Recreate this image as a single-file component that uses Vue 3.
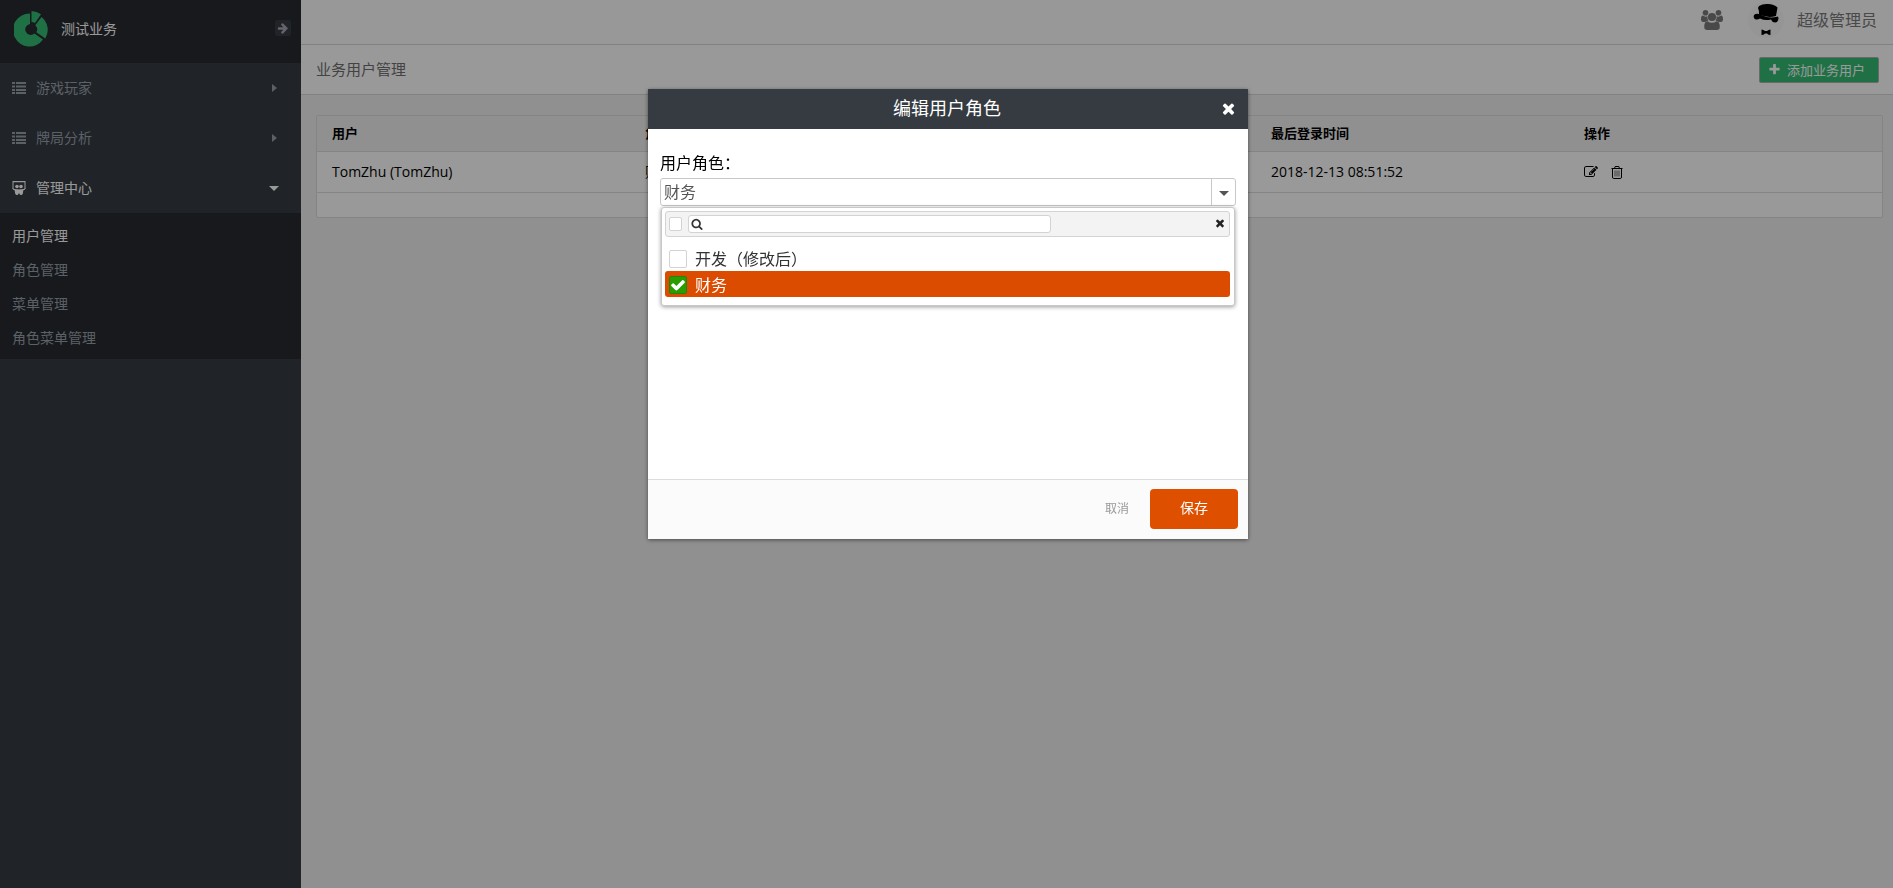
<script setup>
import { ref } from 'vue'

const paths = {
  times: 'M1490 1322q0 40-28 68l-136 136q-28 28-68 28t-68-28l-294-294-294 294q-28 28-68 28t-68-28l-136-136q-28-28-28-68t28-68l294-294-294-294q-28-28-28-68t28-68l136-136q28-28 68-28t68 28l294 294 294-294q28-28 68-28t68 28l136 136q28 28 28 68t-28 68l-294 294 294 294q28 28 28 68z',
  plus: 'M1600 736v192q0 40-28 68t-68 28h-416v416q0 40-28 68t-68 28h-192q-40 0-68-28t-28-68v-416h-416q-40 0-68-28t-28-68v-192q0-40 28-68t68-28h416v-416q0-40 28-68t68-28h192q40 0 68 28t28 68v416h416q40 0 68 28t28 68z',
  search: 'M1216 832q0-185-131.500-316.500t-316.500-131.500-316.500 131.500-131.500 316.500 131.500 316.500 316.500 131.500 316.500-131.500 131.500-316.500zm512 832q0 52-38 90t-90 38q-54 0-90-38l-343-342q-179 124-399 124-143 0-273.500-55.500t-225-150-150-225-55.500-273.500 55.500-273.500 150-225 225-150 273.500-55.500 273.500 55.500 225 150 150 225 55.500 273.500q0 220-124 399l343 343q37 37 37 90z',
  arrow: 'M1600 960q0 54-37 91l-651 651q-39 37-91 37-51 0-90-37l-75-75q-38-38-38-91t38-91l293-293h-704q-52 0-84.500-37.500t-32.500-90.500v-128q0-53 32.500-90.500t84.500-37.500h704l-293-294q-38-36-38-90t38-90l75-75q38-38 90-38 53 0 91 38l651 651q37 35 37 90z',
  check: 'M1671 566q0 40-28 68l-724 724-136 136q-28 28-68 28t-68-28l-136-136-362-362q-28-28-28-68t28-68l136-136q28-28 68-28t68 28l294 295 656-657q28-28 68-28t68 28l136 136q28 28 28 68z',
  edit: 'M888 1184l116-116-152-152-116 116v56h96v96h56zm440-720q-16-16-33 1l-350 350q-17 17-1 33t33-1l350-350q17-17 1-33zm80 594v190q0 119-84.500 203.500t-203.500 84.500h-832q-119 0-203.500-84.500t-84.500-203.500v-832q0-119 84.500-203.500t203.500-84.500h832q63 0 117 25 15 7 18 23 3 17-9 29l-49 49q-14 14-32 8-23-6-45-6h-832q-66 0-113 47t-47 113v832q0 66 47 113t113 47h832q66 0 113-47t47-113v-126q0-13 9-22l64-64q15-15 35-7t20 29zm-96-738l288 288-672 672h-288v-288zm444 132l-92 92-288-288 92-92q28-28 68-28t68 28l152 152q28 28 28 68t-28 68z'
}

const menus = [
  { name: '游戏玩家', open: false },
  { name: '牌局分析', open: false },
  { name: '管理中心', open: true }
]
const subMenus = ['用户管理', '角色管理', '菜单管理', '角色菜单管理']
const columns = ['用户', '角色', '', '最后登录时间', '操作']
const roles = ref([
  { name: '开发（修改后）', checked: false },
  { name: '财务', checked: true }
])
const keyword = ref('')
</script>

<template>
  <div class="layout">
    <aside class="sidebar">
      <header class="brand">
        <svg class="logo" viewBox="0 0 34 36" aria-hidden="true">
          <path d="M16 2.500V13a5.500 5.500 0 1 0 4.500 9.500l8.500 6A16.500 16.500 0 1 1 16 2.500z" />
          <path d="M17.500 0a17 17 0 0 1 9.500 3.300L21 12a7 7 0 0 0-3.500-1z" />
          <path d="M27.500 6a16.500 16.500 0 0 1 3.800 21.500L22.300 21.300a5.500 5.500 0 0 0-1-7z" />
        </svg>
        <span class="brand-name">测试业务</span>
        <button class="collapse" type="button" aria-label="收起菜单">
          <svg viewBox="0 0 1792 1792"><path :d="paths.arrow" /></svg>
        </button>
      </header>
      <nav>
        <button v-for="m in menus" :key="m.name" type="button" class="menu" :class="{ open: m.open }">
          <svg v-if="!m.open" class="menu-icon" viewBox="0 0 14 14" aria-hidden="true">
            <path d="M0 1h3v2H0zM4 1h10v2H4zM0 4.500h3v2H0zM4 4.500h10v2H4zM0 8h3v2H0zM4 8h10v2H4zM0 11h3v2H0zM4 11h10v2H4z" />
          </svg>
          <svg v-else class="menu-icon" viewBox="0 0 14 14" aria-hidden="true">
            <path d="M.5 0h13v8h-1V1.200h-11V8h-1z" />
            <circle cx="5" cy="5.500" r="1.800" /><circle cx="9" cy="5.500" r="1.800" />
            <path d="M.3 7.200q3 1.600 6.200 1 .5.500 1 0 3.200.6 6.200-1-.7 1.600-2.600 2.400.4 3.600-1.500 4.400-1.900.3-2.100-1.500-.5.300-1 0-.2 1.800-2.100 1.500-1.900-.8-1.500-4.400Q1 8.800.3 7.200z" />
          </svg>
          <span>{{ m.name }}</span>
          <i class="caret" :class="m.open ? 'down' : 'right'"></i>
        </button>
        <ul class="submenu">
          <li v-for="(s, i) in subMenus" :key="s"><a href="#" :class="{ active: i === 0 }">{{ s }}</a></li>
        </ul>
      </nav>
    </aside>

    <main class="main">
      <header class="topbar">
        <svg class="users" viewBox="0 0 22 20" aria-hidden="true">
          <circle cx="4.500" cy="2.800" r="2.800" /><circle cx="17.500" cy="2.800" r="2.800" />
          <path d="M6.500 6.300Q6 9 7.600 10.500 5.500 10.600 4.400 12H2.400Q0 12 0 9.800 0 5.600 1.800 5.600q2.500 1.700 4.700.7zM15.500 6.300q.5 2.700-1.100 4.200 2.100.1 3.200 1.500h2q2.400 0 2.400-2.200 0-4.200-1.800-4.200-2.500 1.700-4.700.7z" />
          <circle cx="11" cy="7" r="4.100" />
          <path d="M6.500 11.200Q11 14.500 15.500 11.200q3.300 0 3.300 5.800 0 3-3 3H6.200q-3 0-3-3 0-5.800 3.300-5.800z" />
        </svg>
        <svg class="avatar" viewBox="0 0 36 36" aria-hidden="true">
          <circle class="avatar-back" cx="18" cy="18" r="18" />
          <path d="M11 4q4-2.500 9-2 6 .4 9.500 3.500L28 14q-8 2.500-17-1.500.6-3-1-6.500z" />
          <path d="M6 13q2-2 5-1 8 4.500 17 3 2.500-1.500 2.500 1.500-.5 4-3.500 4-3-.2-4-3-6 1.500-11-1-3 2-5.500.2Q5 15 6 13z" />
          <path d="M13.500 27.500q2 0 3.500 1.500h2q1.500-1.500 3.500-1.500v5.500q-2 0-3.500-1.500h-2q-1.500 1.500-3.500 1.500z" />
        </svg>
        <span class="user-name">超级管理员</span>
      </header>
      <div class="titlebar">
        <h1>业务用户管理</h1>
        <button class="add" type="button">
          <svg viewBox="0 0 1792 1792" aria-hidden="true"><path :d="paths.plus" /></svg>
          <span>添加业务用户</span>
        </button>
      </div>
      <section class="content">
        <div class="panel">
          <table>
            <thead>
              <tr><th v-for="c in columns" :key="c">{{ c }}</th></tr>
            </thead>
            <tbody>
              <tr>
                <td>TomZhu (TomZhu)</td>
                <td>财务</td>
                <td></td>
                <td>2018-12-13 08:51:52</td>
                <td>
                  <div class="actions">
                    <button type="button" aria-label="编辑">
                      <svg viewBox="0 0 1792 1792"><path :d="paths.edit" /></svg>
                    </button>
                    <button type="button" aria-label="删除">
                      <svg class="outline" viewBox="0 0 14 14">
                        <path d="M1.500 3.500h11M4.500 3.500l.7-2h3.600l.7 2M2.500 3.500v8.500q0 1.500 1.200 1.500h6.600q1.200 0 1.200-1.500V3.500" />
                        <path class="thin" d="M5 5.500v6M7 5.500v6M9 5.500v6" />
                      </svg>
                    </button>
                  </div>
                </td>
              </tr>
            </tbody>
          </table>
        </div>
      </section>
    </main>

    <div class="overlay">
      <section class="dialog" role="dialog" aria-labelledby="dialog-title">
        <header class="dialog-head">
          <h2 id="dialog-title">编辑用户角色</h2>
          <button type="button" class="close" aria-label="关闭">
            <svg viewBox="0 0 1792 1792"><path :d="paths.times" /></svg>
          </button>
        </header>
        <div class="dialog-body">
          <label class="field-label" for="role">用户角色：</label>
          <div class="combo">
            <input id="role" type="text" value="财务" readonly />
            <button type="button" aria-label="展开"><i class="caret down"></i></button>
            <div class="popup">
              <div class="filter">
                <input type="checkbox" class="box small" aria-label="全选" />
                <div class="search">
                  <svg viewBox="0 0 1792 1792" aria-hidden="true"><path :d="paths.search" /></svg>
                  <input v-model="keyword" type="text" aria-label="搜索" />
                </div>
                <button type="button" class="filter-close" aria-label="关闭列表">
                  <svg viewBox="0 0 1792 1792"><path :d="paths.times" /></svg>
                </button>
              </div>
              <label v-for="r in roles" :key="r.name" class="option" :class="{ selected: r.checked }">
                <span class="tick">
                  <input v-model="r.checked" type="checkbox" class="box" />
                  <svg v-if="r.checked" viewBox="0 0 1792 1792"><path :d="paths.check" /></svg>
                </span>
                <span>{{ r.name }}</span>
              </label>
            </div>
          </div>
        </div>
        <footer class="dialog-foot">
          <button type="button" class="cancel">取消</button>
          <button type="button" class="save">保存</button>
        </footer>
      </section>
    </div>
  </div>
</template>

<style>
body {
  background: #f0f0f0;
}
</style>

<style scoped>
* {
  box-sizing: border-box;
}
.layout {
  display: flex;
  min-height: 100vh;
  font-family: "Open Sans", "Noto Sans CJK SC", sans-serif;
  font-size: 14px;
  line-height: 20px;
  color: #000;
}
button {
  padding: 0;
  border: 0;
  background: none;
  color: inherit;
  font: inherit;
  cursor: pointer;
}
svg {
  display: block;
  fill: currentColor;
}
input {
  font: inherit;
  margin: 0;
  outline: 0;
}

.sidebar {
  flex: 0 0 301px;
  background: #363b42;
  color: #98a2ac;
}
.brand {
  display: flex;
  align-items: center;
  height: 63px;
  padding: 0 10px 0 14px;
  background: #282a30;
  color: #fff;
}
.logo {
  width: 34px;
  height: 36px;
  margin-bottom: 5px;
  color: #34bd74;
}
.brand-name {
  flex: 1;
  margin: 0 0 5px 13px;
}
.collapse {
  display: grid;
  place-items: center;
  width: 16px;
  height: 16px;
  margin-bottom: 7px;
  border-radius: 2px;
  background: #363b42;
  color: #a4abb5;
}
.collapse svg {
  width: 12px;
  height: 12px;
}
.menu {
  display: flex;
  align-items: center;
  gap: 10px;
  width: 100%;
  height: 50px;
  padding: 0 22px 0 12px;
  text-align: left;
}
.menu span {
  flex: 1;
}
.menu-icon {
  width: 14px;
  height: 14px;
}
.menu.open {
  color: #fff;
}
.caret {
  width: 0;
  height: 0;
  border: 0 solid transparent;
}
.caret.down {
  border-width: 5px 5px 0;
  border-top-color: currentColor;
}
.caret.right {
  margin-right: 2px;
  border-width: 4px 0 4px 5px;
  border-left-color: currentColor;
}
.submenu {
  margin: 0;
  padding: 6px 0 4px;
  list-style: none;
  background: #282a30;
}
.submenu a {
  display: block;
  padding: 7px 12px;
  color: #98a2ac;
  text-decoration: none;
}
.submenu a.active {
  color: #fff;
}

.main {
  flex: 1;
  min-width: 0;
}
.topbar {
  display: flex;
  align-items: center;
  justify-content: flex-end;
  height: 45px;
  padding: 0 16px 4px 0;
  border-bottom: 1px solid #d8d8d8;
  background: #fdfdfd;
  color: #7b7b7b;
}
.users {
  width: 22px;
  height: 20px;
}
.avatar {
  width: 36px;
  height: 36px;
  margin: 0 13px 0 25px;
  color: #000;
}
.avatar-back {
  fill: #f9f9f9;
}
.user-name {
  font-size: 16px;
}
.titlebar {
  display: flex;
  align-items: center;
  justify-content: space-between;
  height: 50px;
  padding: 0 14px 0 15px;
  border-bottom: 1px solid #d8d8d8;
  background: #fff;
}
h1 {
  margin: 0 0 2px;
  font-size: 15px;
  font-weight: 400;
  color: #707070;
}
.add {
  display: flex;
  align-items: center;
  gap: 6px;
  height: 26px;
  padding: 0 13px 0 8px;
  border: 1px solid #b0b0b0;
  border-radius: 2px;
  background: #34bd74;
  color: #fff;
  font-size: 13px;
}
.add svg {
  width: 13px;
  height: 13px;
}
.content {
  padding: 20px 10px 20px 15px;
}
.panel {
  padding-bottom: 24px;
  border: 1px solid #dcdcdc;
  border-radius: 2px;
  background: #fff;
}
table {
  width: 100%;
  table-layout: fixed;
  border-collapse: collapse;
}
th,
td {
  padding: 0 15px;
  border-bottom: 1px solid #dcdcdc;
  text-align: left;
}
th {
  height: 35px;
  padding-bottom: 1px;
  background: #f1f1f1;
  font-size: 13px;
  font-weight: 700;
}
td {
  height: 41px;
}
.actions {
  display: flex;
  gap: 12px;
}
.actions svg {
  width: 14px;
  height: 14px;
}
.outline {
  fill: none;
  stroke: currentColor;
}
.thin {
  opacity: 0.6;
}

.overlay {
  position: fixed;
  inset: 0;
  display: flex;
  align-items: flex-start;
  justify-content: center;
  padding: 89px 0 0 3px;
  background: rgba(0, 0, 0, 0.4);
}
.dialog {
  display: flex;
  flex-direction: column;
  width: 600px;
  min-height: 450px;
  background: #fff;
  box-shadow: 0 1px 4px rgba(0, 0, 0, 0.5);
}
.dialog-head {
  display: flex;
  align-items: center;
  height: 40px;
  padding: 0 11px 2px 26px;
  background: #363b42;
  color: #fff;
}
h2 {
  flex: 1;
  margin: 0;
  font-size: 18px;
  font-weight: 400;
  text-align: center;
}
.close svg {
  width: 17px;
  height: 17px;
}
.dialog-body {
  flex: 1;
  padding: 24px 12px;
  font-size: 16px;
}
.field-label {
  display: block;
  height: 25px;
}
.combo {
  position: relative;
  display: flex;
  height: 28px;
  border: 1px solid #c8c8c8;
  border-radius: 3px;
  color: #555;
}
.combo > input {
  flex: 1;
  min-width: 0;
  padding: 0 3px;
  border: 0;
  background: none;
  color: #555;
}
.combo > button {
  display: grid;
  place-items: center;
  width: 24px;
  padding-top: 2px;
  border-left: 1px solid #c8c8c8;
}
.popup {
  position: absolute;
  top: 28px;
  left: 0;
  right: 0;
  padding: 3px 4px 8px 3px;
  border: 1px solid #c8c8c8;
  border-radius: 3px;
  background: #fff;
  box-shadow: 0 1px 4px rgba(0, 0, 0, 0.4);
  color: #333;
}
.filter {
  display: flex;
  align-items: center;
  height: 26px;
  margin-bottom: 8px;
  padding: 0 3px;
  border: 1px solid #d3d3d3;
  border-radius: 3px;
  background: #f3f3f3;
}
.search {
  display: flex;
  align-items: center;
  width: 363px;
  height: 18px;
  margin-left: 6px;
  padding: 0 2px;
  border: 1px solid #d3d3d3;
  border-radius: 3px;
  background: #fff;
}
.search svg {
  width: 12px;
  height: 12px;
}
.search input {
  flex: 1;
  min-width: 0;
  height: 16px;
  border: 0;
  background: none;
  font-size: 12px;
}
.filter-close {
  margin: 0 0 2px auto;
  color: #222;
}
.filter-close svg {
  width: 12px;
  height: 12px;
}
.box {
  display: block;
  appearance: none;
  width: 18px;
  height: 18px;
  border: 1px solid #d3d3d3;
  border-radius: 2px;
  background: #fff;
}
.box.small {
  width: 13px;
  height: 14px;
}
.box:checked {
  border-color: #22850a;
  background: #2a9c00;
}
.option {
  display: flex;
  align-items: center;
  gap: 8px;
  height: 26px;
  padding: 1px 4px 0;
  border-radius: 3px;
}
.option.selected {
  background: #db4c00;
  color: #fff;
}
.tick {
  position: relative;
}
.tick svg {
  position: absolute;
  inset: 1px;
  width: 16px;
  height: 16px;
}
.dialog-foot {
  display: flex;
  align-items: center;
  justify-content: flex-end;
  gap: 21px;
  height: 60px;
  padding: 0 10px 1px;
  border-top: 1px solid #ddd;
  background: #fbfbfb;
}
.cancel {
  font-size: 12px;
  color: #999;
}
.save {
  width: 88px;
  height: 40px;
  padding-bottom: 2px;
  border-radius: 4px;
  background: #de5000;
  color: #fff;
}
</style>
